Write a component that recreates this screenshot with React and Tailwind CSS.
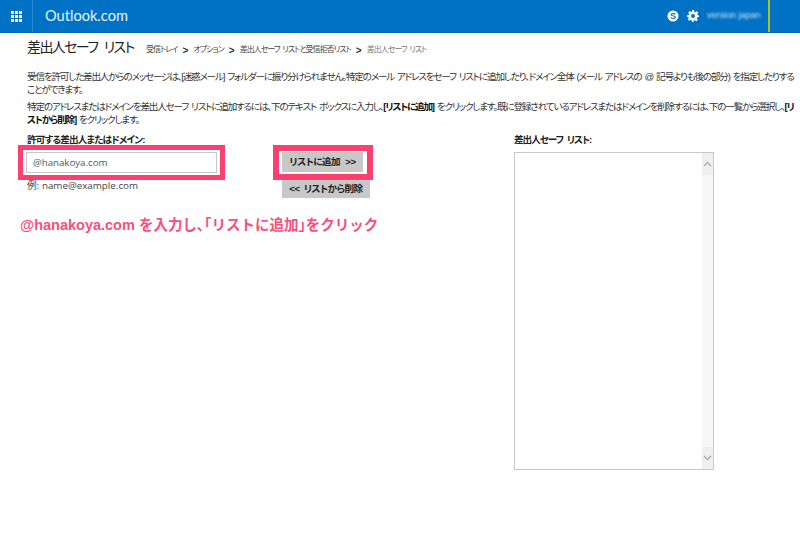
import React from "react";

const font = { fontFamily: '"Liberation Sans", "Noto Sans CJK JP", sans-serif' };

function Sep() {
  return <span className="mx-[5px] text-[10px] font-bold text-[#333] tracking-normal">&gt;</span>;
}

export default function App() {
  return (
    <div className="w-[800px] h-[533px] overflow-hidden bg-white text-[#333] [font-feature-settings:'palt']" style={font}>
      <header className="h-[33px] bg-[#0072c6] border-b border-[#0a6ab5] flex items-center">
        <div className="w-[33px] h-full border-r border-[#2a86d0] flex items-center justify-center">
          <div className="grid grid-cols-3 gap-[1px]">
            {Array.from({ length: 9 }).map((_, i) => (
              <div key={i} className="w-[3px] h-[3px] bg-white" />
            ))}
          </div>
        </div>
        <div className="ml-[12px] text-[14.6px] text-[#e8f3fb]" style={{ fontFamily: 'Lato, sans-serif' }}>Outlook.com</div>
        <div className="ml-auto flex items-center h-full">
          <svg width="12" height="12" viewBox="0 0 12 12" className="mr-[8px]">
            <circle cx="6" cy="6" r="5.5" fill="#fff" />
            <text x="6" y="9" textAnchor="middle" fontSize="9" fontWeight="700" fill="#0072c6" fontFamily="Liberation Sans">S</text>
          </svg>
          <svg width="12" height="12" viewBox="0 0 24 24" className="mr-[8px]">
            <path fill="#fff" fillRule="evenodd" d="M10 0h4l.6 3.4 2.2.9L19.7 2.4l2.8 2.8-1.9 2.9.9 2.2L24 10.9v3.2l-3.4.6-.9 2.2 1.9 2.9-2.8 2.8-2.9-1.9-2.2.9L13 24h-3l-.6-3.3-2.2-.9-2.9 1.9-2.8-2.8 1.9-2.9-.9-2.2L0 13.9v-3.2l3.4-.6.9-2.2-1.9-2.9 2.8-2.8 2.9 1.9 2.2-.9L10 0zm2 8a4 4 0 100 8 4 4 0 000-8z" />
          </svg>
          <div className="w-[54px] text-[9px] text-[#cfe4f5] blur-[1.2px] whitespace-nowrap">version japan</div>
          <div className="ml-[7px] w-[2px] h-full bg-[#a8c520]" />
          <div className="w-[30px]" />
        </div>
      </header>

      <div className="pl-[27px]">
        <div className="flex items-baseline h-[32px] pt-[4px]">
          <h1 className="text-[14px] leading-[20px] text-[#222] w-[119px] whitespace-nowrap tracking-[-1.6px] [word-spacing:4px]">差出人セーフ リスト</h1>
          <nav className="text-[8px] whitespace-nowrap text-[#444] flex items-center tracking-[-0.95px] [word-spacing:1.5px]">
            <span>受信トレイ</span><Sep />
            <span>オプション</span><Sep />
            <span>差出人セーフ リストと受信拒否リスト</span><Sep />
            <span className="text-[#777]">差出人セーフ リスト</span>
          </nav>
        </div>

        <div className="mt-[5px] text-[9.6px] leading-[13px] text-[#333] whitespace-nowrap tracking-[-1.2px] [word-spacing:1.5px]">
          <p>受信を許可した差出人からのメッセージは、[迷惑メール] フォルダーに振り分けられません。特定のメール アドレスをセーフ リストに追加したり、ドメイン全体 (メール アドレスの @ 記号よりも後の部分) を指定したりする</p>
          <p>ことができます。</p>
          <p className="mt-[4px]">特定のアドレスまたはドメインを差出人セーフ リストに追加するには、下のテキスト ボックスに入力し、<b className="text-[#111]">[リストに追加]</b> をクリックします。既に登録されているアドレスまたはドメインを削除するには、下の一覧から選択し、<b className="text-[#111]">[リ</b></p>
          <p><b className="text-[#111]">ストから削除]</b> をクリックします。</p>
        </div>

        <div className="flex mt-[7px] -ml-[9px]">
          <div className="w-[255px]">
            <div className="ml-[9px] text-[9.6px] font-bold leading-[13px] text-[#222] tracking-[-0.85px]">許可する差出人またはドメイン:</div>
            <div className="-mt-[1px] w-[207px] h-[35px] border-[5px] border-[#f9406f] px-[3px] py-[2px]">
              <div className="w-full h-full border border-[#c8c8c8] pl-[6px] pt-[2px] flex items-center text-[9.7px] text-[#555]" style={{ fontFamily: '"Open Sans", sans-serif' }}>@hanakoya.com</div>
            </div>
            <div className="ml-[9px] -mt-[1px] text-[9.8px] leading-[14px] text-[#444] whitespace-nowrap" style={{ fontFamily: '"Open Sans", "Noto Sans CJK JP", sans-serif' }}>例: name@example.com</div>
            <div className="ml-[2px] mt-[22px] text-[14.5px] leading-[20px] font-bold text-[#f9507a] whitespace-nowrap [font-feature-settings:normal]" style={font}>
              @hanakoya.com を入力し､｢リストに追加｣をクリック
            </div>
          </div>

          <div className="w-[241px] pt-[12px]">
            <div className="w-[100px] h-[35px] border-[6px] border-[#f9406f] pl-[3px] pr-[4px] pt-[1px] pb-[2px] bg-white flex">
              <div className="flex-1 bg-[#c8c8c8] text-[9.6px] font-bold text-[#222] flex items-center justify-center whitespace-nowrap tracking-[-0.5px] [word-spacing:3px]">リストに追加 &gt;&gt;</div>
            </div>
            <div className="ml-[9px] w-[88px] h-[18px] bg-[#c8c8c8] text-[9.6px] font-bold text-[#222] flex items-center justify-center whitespace-nowrap tracking-[-0.5px] [word-spacing:2px]">&lt;&lt; リストから削除</div>
          </div>

          <div>
            <div className="text-[9.6px] font-bold leading-[13px] text-[#222] tracking-[-1px] [word-spacing:2px]">差出人セーフ リスト:</div>
            <div className="mt-[6px] w-[200px] h-[318px] border border-[#c8c8c8] flex justify-end">
              <div className="w-[11px] h-full bg-[#f7f7f7] flex flex-col justify-between">
                <div className="h-[22px] bg-[#efefef] flex items-center justify-center">
                  <svg width="9" height="6" viewBox="0 0 9 6"><path d="M1 5l3.5-3.5L8 5" fill="none" stroke="#aaa" strokeWidth="1.3" /></svg>
                </div>
                <div className="h-[22px] bg-[#efefef] flex items-center justify-center">
                  <svg width="9" height="6" viewBox="0 0 9 6"><path d="M1 1l3.5 3.5L8 1" fill="none" stroke="#aaa" strokeWidth="1.3" /></svg>
                </div>
              </div>
            </div>
          </div>
        </div>
      </div>
    </div>
  );
}
